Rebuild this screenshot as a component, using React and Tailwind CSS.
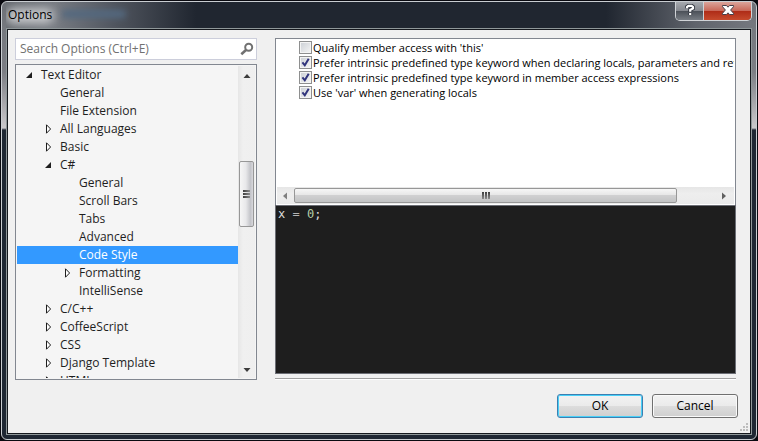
import React from 'react';

const tree = [
  { label: 'Text Editor', level: 0, state: 'open' },
  { label: 'General', level: 1 },
  { label: 'File Extension', level: 1 },
  { label: 'All Languages', level: 1, state: 'closed' },
  { label: 'Basic', level: 1, state: 'closed' },
  { label: 'C#', level: 1, state: 'open' },
  { label: 'General', level: 2 },
  { label: 'Scroll Bars', level: 2 },
  { label: 'Tabs', level: 2 },
  { label: 'Advanced', level: 2 },
  { label: 'Code Style', level: 2, selected: true },
  { label: 'Formatting', level: 2, state: 'closed' },
  { label: 'IntelliSense', level: 2 },
  { label: 'C/C++', level: 1, state: 'closed' },
  { label: 'CoffeeScript', level: 1, state: 'closed' },
  { label: 'CSS', level: 1, state: 'closed' },
  { label: 'Django Template', level: 1, state: 'closed' },
  { label: 'HTML', level: 1, state: 'closed' },
];

const indents = ['pl-2', 'pl-[27px]', 'pl-[46px]'];

const choices = [
  { id: 'qualify', label: "Qualify member access with 'this'", checked: false },
  {
    id: 'declare',
    label: 'Prefer intrinsic predefined type keyword when declaring locals, parameters and return types',
    checked: true,
  },
  { id: 'access', label: 'Prefer intrinsic predefined type keyword in member access expressions', checked: true },
  { id: 'var', label: "Use 'var' when generating locals", checked: true },
];

function Expander({ state }) {
  return (
    <svg className="h-3 w-2 shrink-0" viewBox="0 0 8 12" aria-hidden="true">
      {state === 'open' && <path d="M7 3v6H1z" fill="#1e1e1e" />}
      {state === 'closed' && <path d="M2.5 1.8v8.4L6.6 6z" fill="#fff" stroke="#1e1e1e" />}
    </svg>
  );
}

function TitleBar() {
  return (
    <header className="relative flex h-[26px] shrink-0 items-start justify-between overflow-hidden bg-[linear-gradient(90deg,#666a70_0,#777b82_50px,#50555e_110px,#202630_190px,#202630_600px,#60646c_690px,#74777e_100%)]">
      <span className="absolute top-2 left-[56px] h-2 w-16 rounded-full bg-[#53687f] blur-[3px]" />
      <span className="absolute top-1.5 left-0 h-4 w-12 rounded-full bg-[#c4c6c9] blur-[5px]" />
      <h1 className="relative pt-1 pl-0.5 text-[12px] leading-[18px] text-black">Options</h1>
      <div className="relative flex h-[19px] overflow-hidden rounded-b-[5px] border border-t-0 border-[#d0d3d7]">
        <button
          aria-label="Help"
          className="flex w-[28px] items-center justify-center border-r border-[#d0d3d7] bg-[linear-gradient(#a6a9ae,#85888f_48%,#4b5058_50%,#777c83)] pb-0.5"
        >
          <svg className="h-3 w-3" viewBox="0 0 12 12" aria-hidden="true">
            <path
              d="M3 4.2V3L4.4 1.8h3.2L9 3v1.4L6.2 6v2M6.2 8.8V11"
              fill="none"
              stroke="#343842"
              strokeWidth="4"
            />
            <path
              d="M3 4.2V3L4.4 1.8h3.2L9 3v1.4L6.2 6v1.8M6.2 9v2"
              fill="none"
              stroke="#fff"
              strokeWidth="2.2"
            />
          </svg>
        </button>
        <button
          aria-label="Close"
          className="flex w-[47px] items-center justify-center bg-[linear-gradient(#dba49a,#c9695a_48%,#ae2b17_50%,#c64b2d)] pb-0.5"
        >
          <svg className="h-3 w-3.5" viewBox="0 0 14 12" aria-hidden="true">
            <path
              d="M1.5 1.5h4L7 3.2l1.5-1.7h4v1.2L9.6 6l2.9 3.3v1.2h-4L7 8.8l-1.5 1.7h-4V9.3L4.4 6 1.5 2.7z"
              fill="#fff"
              stroke="#46404a"
            />
          </svg>
        </button>
      </div>
    </header>
  );
}

function Sidebar() {
  return (
    <div className="flex w-[242px] shrink-0 flex-col gap-1">
      <div className="flex h-[22px] shrink-0 items-center border border-[#cccedb] bg-white pr-1 pl-1">
        <input
          type="text"
          aria-label="Search Options"
          placeholder="Search Options (Ctrl+E)"
          className="min-w-0 flex-1 bg-transparent text-[12px] leading-4 outline-none placeholder:text-[#717171]"
        />
        <svg className="-mr-0.5 h-3.5 w-3.5" viewBox="0 0 14 14" aria-hidden="true">
          <circle cx="8.7" cy="5.2" r="3.5" fill="none" stroke="#717171" strokeWidth="2" />
          <path d="M6 8L1.3 12.2" stroke="#717171" strokeWidth="2.6" />
        </svg>
      </div>
      <div className="flex min-h-0 flex-1 border border-[#828790] bg-[#f5f5f5] p-px">
        <ul role="tree" aria-label="Option pages" className="h-full min-w-0 flex-1 overflow-hidden">
          {tree.map((node, i) => (
            <li
              key={i}
              role="treeitem"
              aria-level={node.level + 1}
              aria-selected={Boolean(node.selected)}
              className={`flex h-[18px] items-center gap-2 text-[12px] leading-[18px] ${indents[node.level]} ${
                node.selected ? 'bg-[#3399ff] text-white' : 'text-[#1e1e1e]'
              }`}
            >
              <Expander state={node.state} />
              {node.label}
            </li>
          ))}
        </ul>
        <div className="flex w-[17px] flex-col items-center bg-[linear-gradient(90deg,#e6e6e6,#f0f0f0_30%,#efefef)]">
          <svg className="mt-1.5 h-2 w-2" viewBox="0 0 8 8" aria-hidden="true">
            <path d="M0.5 6L4 2l3.5 4z" fill="#3c3c3c" />
          </svg>
          <div className="mt-[81px] flex h-[66px] w-[15px] flex-col items-center justify-center gap-px rounded-[2px] border border-[#979797] bg-[linear-gradient(90deg,#f6f6f6,#e8e8ea_45%,#c3c4c9_80%,#d8d8dc)]">
            <span className="h-0.5 w-[7px] bg-[linear-gradient(90deg,#3c3c3c,#8c8c8c)]" />
            <span className="h-0.5 w-[7px] bg-[linear-gradient(90deg,#3c3c3c,#8c8c8c)]" />
            <span className="h-0.5 w-[7px] bg-[linear-gradient(90deg,#3c3c3c,#8c8c8c)]" />
          </div>
          <svg className="mt-auto mb-1 h-2 w-2" viewBox="0 0 8 8" aria-hidden="true">
            <path d="M0.5 2L4 6l3.5-4z" fill="#3c3c3c" />
          </svg>
        </div>
      </div>
    </div>
  );
}

function Choice({ id, label, checked }) {
  return (
    <li className="flex h-[15px] items-center">
      <span className="relative h-[13px] w-[13px] shrink-0">
        <input
          id={id}
          type="checkbox"
          defaultChecked={checked}
          className="peer block h-[13px] w-[13px] appearance-none border border-[#8e8f8f] bg-[linear-gradient(135deg,#cbcfd5,#f6f6f6)] shadow-[inset_0_0_0_1px_#f4f4f4]"
        />
        <svg
          className="pointer-events-none absolute inset-0 hidden h-[13px] w-[13px] peer-checked:block"
          viewBox="0 0 13 13"
          aria-hidden="true"
        >
          <path d="M3.4 6.3l2.4 3L9.7 2.8" fill="none" stroke="#31347c" strokeWidth="2" />
        </svg>
      </span>
      <label htmlFor={id} className="ml-px text-[11px] leading-[15px] whitespace-nowrap text-black">
        {label}
      </label>
    </li>
  );
}

function StylePage() {
  return (
    <div className="flex min-w-0 flex-1 flex-col">
      <div className="flex h-[167px] shrink-0 flex-col border border-b-0 border-[#828790] bg-white p-px">
        <ul className="flex-1 overflow-hidden pl-[22px]">
          {choices.map((c) => (
            <Choice key={c.id} {...c} />
          ))}
        </ul>
        <div className="flex h-[17px] items-center bg-[linear-gradient(#e6e6e6,#eeeeee_40%,#eaeaea)]">
          <svg className="mx-1 h-2 w-[9px] shrink-0" viewBox="0 0 9 8" aria-hidden="true">
            <path d="M6 0.5v7L2 4z" fill="#808080" />
          </svg>
          <div className="flex h-[15px] w-[383px] shrink items-center justify-center gap-px rounded-[2px] border border-[#979797] bg-[linear-gradient(#f6f6f6,#e6e6e6_48%,#d0d0d1_50%,#c2c3c4)]">
            <span className="h-[7px] w-0.5 bg-[linear-gradient(#3c3c3c,#8c8c8c)]" />
            <span className="h-[7px] w-0.5 bg-[linear-gradient(#3c3c3c,#8c8c8c)]" />
            <span className="h-[7px] w-0.5 bg-[linear-gradient(#3c3c3c,#8c8c8c)]" />
          </div>
          <svg className="mr-1.5 ml-auto h-2 w-2 shrink-0" viewBox="0 0 8 8" aria-hidden="true">
            <path d="M2 0.5v7L6 4z" fill="#606060" />
          </svg>
        </div>
      </div>
      <pre className="min-h-0 flex-1 border border-[#6c6e75] bg-[#1e1e1e] px-0.5 font-['DejaVu_Sans_Mono',monospace] text-[12px] leading-4 text-[#dcdcdc]">
        <code className="font-['DejaVu_Sans_Mono',monospace]">
          x <span className="text-[#b4b4b4]">=</span> <span className="text-[#b5cea8]">0</span>;
        </code>
      </pre>
      <div className="mt-1 h-0.5 shrink-0 border-t border-[#a0a0a0] bg-white" />
    </div>
  );
}

export default function App() {
  return (
    <div className="h-screen bg-[#0a0a10] p-px font-['Open_Sans','Noto_Sans',sans-serif]">
      <div className="flex h-full flex-col overflow-hidden rounded-[6px] border border-[#c9cdd1] bg-[linear-gradient(#6d7076_0,#75787e_26px,#7c7e84_70px,#cac8cb_126px,#1f2733_128px,#1f2733_100%)] px-1">
        <TitleBar />
        <main className="mb-1 flex min-h-0 flex-1 flex-col border border-[#8f9799]">
          <div className="relative flex min-h-0 flex-1 flex-col border border-[#15181d] bg-[#f0f0f0] pt-2 pb-[15px]">
            <div className="flex min-h-0 flex-1 gap-[18px] pr-[14px] pl-[7px]">
              <Sidebar />
              <StylePage />
            </div>
            <div className="mt-[14px] flex shrink-0 justify-end gap-[9px] pr-3">
              <button className="h-6 w-[86px] rounded-[3px] border border-[#3c7fb1] bg-[linear-gradient(#f2f2f2,#ebebeb_48%,#dddddd_50%,#cfcfcf)] text-[12px] leading-5 text-black shadow-[inset_0_0_0_1px_#48d0f8]">
                OK
              </button>
              <button className="h-6 w-[86px] rounded-[3px] border border-[#707070] bg-[linear-gradient(#f2f2f2,#ebebeb_48%,#dddddd_50%,#cfcfcf)] text-[12px] leading-5 text-black shadow-[inset_0_0_0_1px_#fafafa]">
                Cancel
              </button>
            </div>
            <svg className="absolute right-0.5 bottom-0.5 h-2 w-2" viewBox="0 0 8 8" aria-hidden="true">
              <path d="M6 0h2v2H6zM3 3h2v2H3zM6 3h2v2H6zM0 6h2v2H0zM3 6h2v2H3zM6 6h2v2H6z" fill="#bdbdbd" />
            </svg>
          </div>
        </main>
      </div>
    </div>
  );
}
